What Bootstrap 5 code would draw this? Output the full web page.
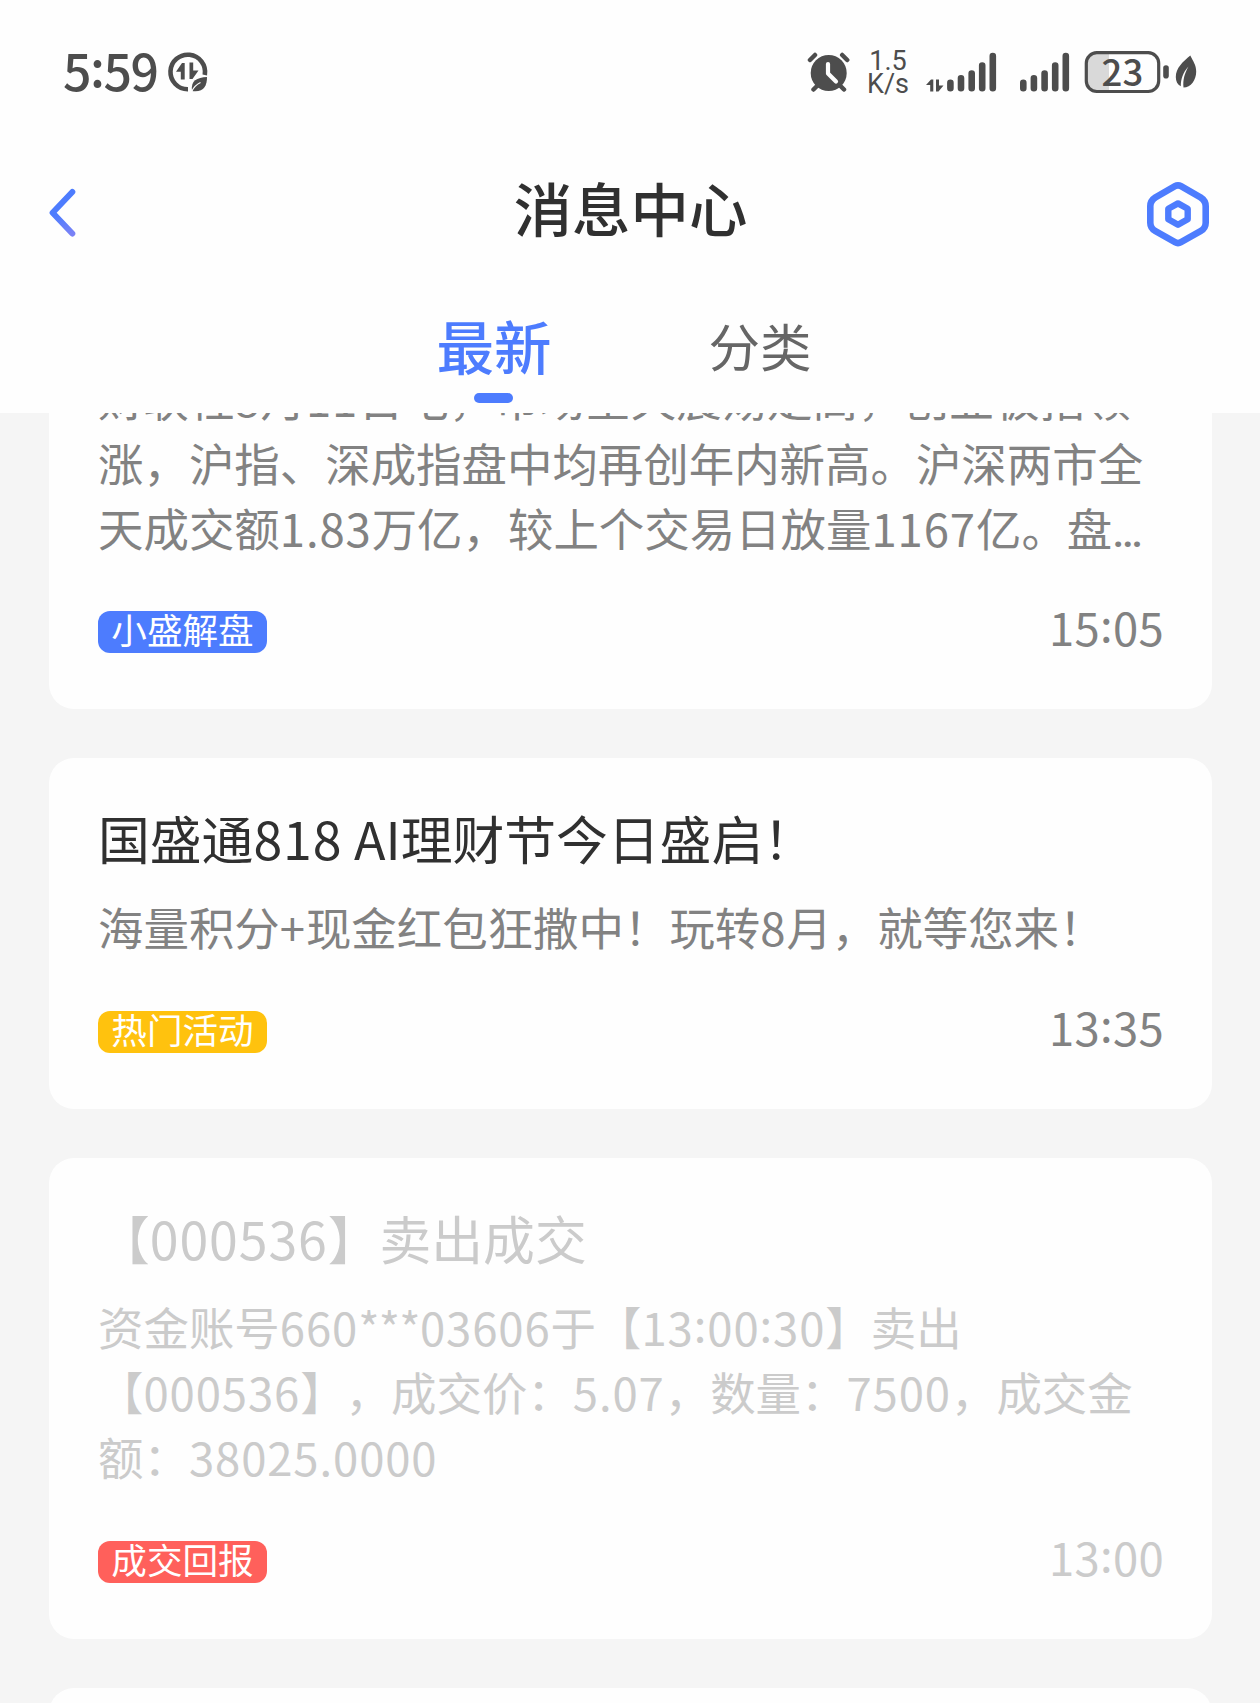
<!DOCTYPE html>
<html lang="zh-CN">
<head>
<meta charset="utf-8">
<meta name="viewport" content="width=device-width, initial-scale=1">
<title>消息中心</title>
<link rel="stylesheet" href="https://cdn.jsdelivr.net/npm/bootstrap@5.3.0/dist/css/bootstrap.min.css">
<style>
  html, body { height: 1703px; overflow: hidden; }
  body { background: #f5f5f5; font-family: "Noto Sans CJK SC", sans-serif; text-spacing-trim: space-all; color: #303030; }
  svg { display: block; flex: none; }
  .app-header { height: 413px; background: #fefefe; }
  .status-bar { height: 143px; padding: 0 62px 0 63px; color: #4d4d4d; fill: #4d4d4d; }
  .clock { font-size: 50px; line-height: 60px; font-weight: 500; letter-spacing: -1.5px; width: 104px; margin-top: 39px; }
  .net-speed { font: 400 27px/23px Roboto, sans-serif; width: 42px; }
  .title-bar { height: 140px; padding: 0 47px 0 48px; }
  .title-bar h1 { font-size: 58.4px; line-height: 80px; font-weight: 500; margin: -13px 0 0 8px; color: #303030; }
  .tab-row { height: 130px; }
  .tab-item { color: #666; font-size: 51.5px; line-height: 76px; padding: 0; }
  .tab-item.active { color: #4d7cfe; font-size: 57.5px; font-weight: 500; }
  .tab-mark { width: 39px; height: 10px; border-radius: 5px; background: #4d7cfe; }
  .feed { height: 1290px; padding: 0 48px 0 49px; }
  .msg { background: #fefefe; border: 0; border-radius: 25px; padding: 49px 49px 56px; margin-bottom: 49px; flex: none; }
  .msg-cut { margin-top: -94px; }
  .msg h2 { font-size: 51.8px; line-height: 66px; font-weight: 400; margin: -2px 0 26px; color: #303030; white-space: nowrap; }
  .msg p { font-size: 45.45px; line-height: 64.8px; margin: -3px 0 52px; color: #828282; white-space: nowrap; }
  .tag { width: 169px; height: 42px; border-radius: 12px; color: #fff; font-size: 35.6px; line-height: 36px; text-align: center; white-space: nowrap; }
  .tag-blue { background: #4d7cfe; } .tag-gold { background: #ffc20e; } .tag-red { background: #ff605b; }
  .stamp { font-size: 45.4px; line-height: 42px; margin: -6px -1px 0 0; color: #828282; letter-spacing: .3px; height: 42px; }
  .num { letter-spacing: .9px; }
  .stars { letter-spacing: -.6px; }
  .up { position: relative; top: -.09em; }
  .dots { font-family: Roboto, sans-serif; font-size: 43px; letter-spacing: -1px; line-height: 0; font-weight: 500; }
  .msg.read h2, .msg.read p, .msg.read .stamp { color: #cbcbcb; }
</style>
<script src="https://cdn.jsdelivr.net/npm/bootstrap@5.3.0/dist/js/bootstrap.bundle.min.js"></script>
</head>
<body>
<header class="app-header">
  <div class="status-bar d-flex align-items-start">
    <div class="clock">5<span class="up">:</span>59</div>
    <svg style="margin-top:50px" width="42" height="44" viewBox="167 50 42 44">
      <path d="M204.800 75A17.300 17.300 0 1 0 188 89.300" fill="none" stroke="#4d4d4d" stroke-width="4.600"/>
      <path d="M176 71.800L182 63H184.700V79.500H180.800V71.800ZM189.500 62.500H193.200V70.500H198.500L192.500 79H189.500Z"/>
      <path d="M192 91C190.500 80.500 197 77.500 207 77C207 86.500 203.500 92.500 192 91Z"/>
      <path d="M192 91Q194.500 85.500 200.500 82.500" fill="none" stroke="#fefefe" stroke-width="1.200"/>
    </svg>
    <div class="d-flex align-items-start ms-auto">
      <svg style="margin-top:50px" width="44" height="44" viewBox="806 50 44 44">
        <circle cx="828.700" cy="73" r="18"/>
        <path d="M810 60L815 55M847.200 60L842.200 55M813.500 89.500L818 85M844 89.500L839.500 85" stroke="#4d4d4d" stroke-width="4.500" stroke-linecap="round"/>
        <path d="M828 64V73.500L836 81.500" fill="none" stroke="#fefefe" stroke-width="4.200" stroke-linecap="round" stroke-linejoin="round"/>
      </svg>
      <div class="net-speed text-center" style="margin:50px 16px 0 17px">1.5<br>K/s</div>
      <svg style="margin-top:50px" width="74" height="44" viewBox="925 50 74 44">
        <path d="M926 85L931 79.500H933.300V91.500H930.200V85ZM936 79.500H939V85.500H943.500L938.500 91.500H936Z"/>
        <path d="M950.400 82.800V88.300M961 78.300V88.300M971.700 73.500V88.300M982.200 65.500V88.300M992.800 56V88.300" stroke="#4d4d4d" stroke-width="6.600" stroke-linecap="round"/>
      </svg>
      <svg style="margin:50px 0 0 19px" width="55" height="44" viewBox="1018 50 55 44">
        <path d="M1023.300 82.800V88.300M1033.900 78.300V88.300M1044.600 73.500V88.300M1055.200 65.500V88.300M1065.800 56V88.300" stroke="#4d4d4d" stroke-width="6.600" stroke-linecap="round"/>
      </svg>
      <svg style="margin:50px 0 0 11px" width="88" height="44" viewBox="1084 50 88 44">
        <path d="M1109 53H1097Q1086.500 53 1086.500 63.500V81Q1086.500 91.500 1097 91.500H1109Z" fill="#d9d9d9"/>
        <rect x="1086.300" y="52.700" width="72.400" height="38.800" rx="10.500" fill="none" stroke="#4d4d4d" stroke-width="3.200"/>
        <rect x="1163.200" y="65.300" width="5.600" height="13.200" rx="2.800"/>
        <text x="1122.500" y="86" text-anchor="middle" font-size="36.500" font-weight="500" letter-spacing=".3">23</text>
      </svg>
      <svg style="margin:50px 0 0 2px" width="24" height="44" viewBox="1174 50 24 44">
        <path d="M1190.300 55.500C1183 61.500 1175.800 68 1175.800 77C1175.800 81.500 1177.500 84.500 1180.800 86.200C1180.700 79 1183 72.500 1188.500 66.500C1184.500 73.500 1182.700 80 1183.500 87.500C1191 87.500 1196.200 80 1196.200 71.500C1196.200 65 1193 61 1190.300 55.500Z"/>
      </svg>
    </div>
  </div>
  <div class="title-bar d-flex justify-content-between align-items-center">
    <svg width="62" height="60" viewBox="48 183 62 60">
      <defs><linearGradient id="arrow" gradientUnits="userSpaceOnUse" x1="60" y1="190" x2="72" y2="234"><stop offset=".5" stop-color="#4d7cfe"/><stop offset="1" stop-color="#7a82f6"/></linearGradient></defs>
      <path d="M72.300 192L52.600 212.700L72.300 233.500" fill="none" stroke="url(#arrow)" stroke-width="6" stroke-linecap="round" stroke-linejoin="round"/>
    </svg>
    <h1>消息中心</h1>
    <svg width="70" height="70" viewBox="1143 178.300 70 70" fill="none" stroke="#4d7cfe" stroke-linejoin="round">
      <path d="M1175 186.500Q1178 184.700 1181 186.500L1200.500 197.700Q1205.700 201 1205.700 206.500V223Q1205.700 228.500 1200.500 231.500L1181 242.500Q1178 244.300 1175 242.500L1155.500 231.500Q1150.300 228.500 1150.300 223V206.500Q1150.300 201 1155.500 197.700Z" stroke-width="6.600"/>
      <path d="M1178 203.700L1187.700 209V219.500L1178 225L1168.300 219.500V209Z" stroke-width="6.400"/>
    </svg>
  </div>
  <nav class="tab-row d-flex justify-content-center">
    <div class="d-flex flex-column align-items-center" style="margin-right:157px;margin-left:-12px">
      <a class="tab-item active text-decoration-none" style="margin-top:24px">最新</a>
      <span class="tab-mark" style="margin-top:10px"></span>
    </div>
    <a class="tab-item text-decoration-none" style="margin-top:24px">分类</a>
  </nav>
</header>
<main class="feed d-flex flex-column overflow-hidden">
  <article class="card msg msg-cut">
    <p>财联社<span class="num">8</span>月<span class="num">11</span>日电，市场全天震荡走高，创业板指领<br>涨，沪指、深成指盘中均再创年内新高。沪深两市全<br>天成交额<span class="num">1.83</span>万亿，较上个交易日放量<span class="num">1167</span>亿。盘<span class="dots">…</span></p>
    <div class="d-flex justify-content-between"><span class="tag tag-blue">小盛解盘</span><time class="stamp">15<span class="up">:</span>05</time></div>
  </article>
  <article class="card msg">
    <h2>国盛通<span class="num">818</span> AI理财节今日盛启！</h2>
    <p>海量积分<span class="num">+</span>现金红包狂撒中！玩转<span class="num">8</span>月，就等您来！</p>
    <div class="d-flex justify-content-between"><span class="tag tag-gold">热门活动</span><time class="stamp">13<span class="up">:</span>35</time></div>
  </article>
  <article class="card msg read">
    <h2>【<span class="num">000536</span>】卖出成交</h2>
    <p>资金账号<span class="num">660<span class="stars">***</span>03606</span>于【<span class="num">13<span class="up">:</span>00<span class="up">:</span>30</span>】卖出<br>【<span class="num">000536</span>】，成交价：<span class="num">5.07</span>，数量：<span class="num">7500</span>，成交金<br>额：<span class="num">38025.0000</span></p>
    <div class="d-flex justify-content-between"><span class="tag tag-red">成交回报</span><time class="stamp">13<span class="up">:</span>00</time></div>
  </article>
  <article class="card msg" aria-hidden="true"></article>
</main>
</body>
</html>
